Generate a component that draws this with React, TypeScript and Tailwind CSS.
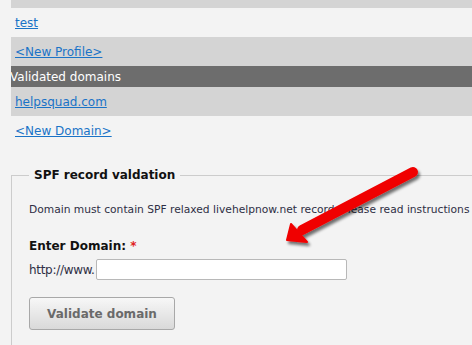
const rows: { label: string; tone: 'dark' | 'light' }[] = [
  { label: 'test', tone: 'light' },
  { label: '<New Profile>', tone: 'dark' },
];

const RedArrow: React.FC = () => (
  <svg
    className="absolute left-[270px] top-[160px] pointer-events-none"
    width="170"
    height="100"
    viewBox="0 0 170 100"
  >
    <defs>
      <filter id="shadow" x="-20%" y="-20%" width="140%" height="140%">
        <feGaussianBlur in="SourceAlpha" stdDeviation="1.6" />
        <feOffset dx="2" dy="3" result="blur" />
        <feComponentTransfer>
          <feFuncA type="linear" slope="0.55" />
        </feComponentTransfer>
        <feMerge>
          <feMergeNode />
          <feMergeNode in="SourceGraphic" />
        </feMerge>
      </filter>
    </defs>
    <g filter="url(#shadow)">
      <line x1="143" y1="12" x2="32" y2="70" stroke="#f00000" strokeWidth="10" strokeLinecap="round" />
      <polygon points="17,80 21,64 37,82" fill="#f00000" stroke="#f00000" strokeWidth="2" strokeLinejoin="round" />
    </g>
  </svg>
);

export default function App() {
  return (
    <div className="relative w-[472px] h-[345px] overflow-hidden bg-[#f3f3f3] font-['DejaVu_Sans',sans-serif] text-[12px]">
      <div className="ml-[11px] -mt-[21px]">
        <div className="h-[29px] bg-[#d4d4d4] flex items-center pl-[4px]">
          <a href="#" className="text-[#1a73c7] underline">demo</a>
        </div>
        {rows.map((r) => (
          <div
            key={r.label}
            className={`h-[29px] flex items-center pl-[4px] ${r.tone === 'dark' ? 'bg-[#d4d4d4]' : 'bg-[#f3f3f3]'}`}
          >
            <a href="#" className="text-[#1a73c7] underline">{r.label}</a>
          </div>
        ))}
        <div className="h-[21px] bg-[#6d6d6d] flex items-center overflow-hidden">
          <span className="text-white -ml-[1px]">Validated domains</span>
        </div>
        <div className="h-[29px] bg-[#d4d4d4] flex items-center pl-[4px]">
          <a href="#" className="text-[#1a73c7] underline">helpsquad.com</a>
        </div>
        <div className="h-[29px] flex items-center pl-[4px]">
          <a href="#" className="text-[#1a73c7] underline">&lt;New Domain&gt;</a>
        </div>
      </div>

      <fieldset className="ml-[11px] mt-[21px] w-[500px] border border-[#cccccc] pl-[17px] pb-[20px]">
        <legend className="px-[5px] font-bold text-[#111] text-[12px]">SPF record valdation</legend>
        <p className="mt-[18px] text-[#2e2e44] text-[10.7px] whitespace-nowrap">
          Domain must contain SPF relaxed livehelpnow.net record. Please read instructions
        </p>
        <div className="mt-[19px] font-bold text-[#111]">
          Enter Domain: <span className="text-[#e02020]">*</span>
        </div>
        <div className="mt-[4px] flex items-center text-[#2e2e44]">
          <span className="tracking-[-0.3px]">http://www.</span>
          <input
            type="text"
            className="ml-[1px] w-[251px] h-[21px] bg-white border border-[#b8b8b8] rounded-[2px]"
          />
        </div>
        <button className="mt-[17px] w-[146px] h-[33px] rounded-[3px] border border-[#a8a8a8] bg-gradient-to-b from-[#f7f7f7] to-[#d9d9d9] font-bold text-[#6a6a6a] text-[12px]">
          Validate domain
        </button>
      </fieldset>

      <RedArrow />
    </div>
  );
}
